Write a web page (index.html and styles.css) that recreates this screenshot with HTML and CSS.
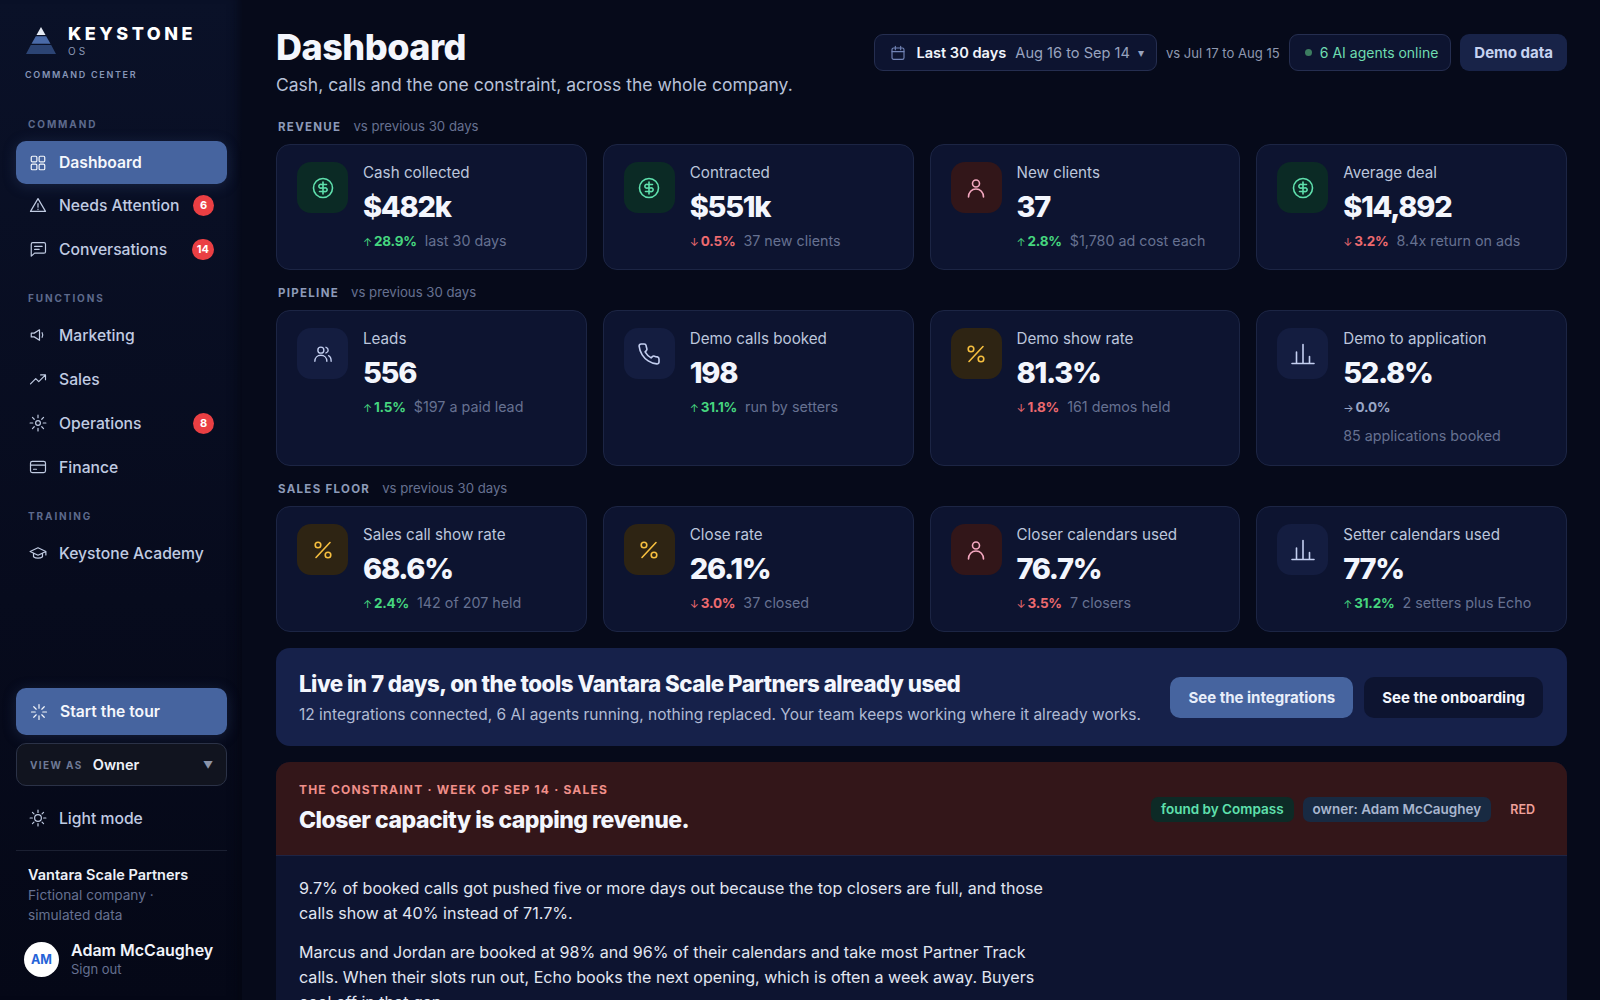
FILE: index.html
```html
<!DOCTYPE html>
<html lang="en">
<head>
    <meta charset="UTF-8">
    <meta name="viewport" content="width=device-width, initial-scale=1.0">
    <title>Keystone OS - Dashboard</title>
    <link rel="stylesheet" href="styles.css">
</head>
<body>
    <!-- Icon sprite -->
    <svg class="sprite" xmlns="http://www.w3.org/2000/svg">
        <symbol id="i-money" viewBox="0 0 24 24"><circle cx="12" cy="12" r="9.5"/><path d="M15.5 8.5H10.5a1.9 1.9 0 1 0 0 3.5h3a1.9 1.9 0 1 1 0 3.500H8.500M12 18V6"/></symbol>
        <symbol id="i-person" viewBox="0 0 24 24"><circle cx="12" cy="7.5" r="3.5"/><path d="M4.5 21c0-4.8 3.2-8 7.5-8s7.500 3.200 7.500 8"/></symbol>
        <symbol id="i-people" viewBox="-2 -2 28 28"><circle cx="9.5" cy="7.5" r="3.5"/><path d="M2.500 20.500c0-4.300 3-7 7-7s7 2.700 7 7M15.500 4.200c1.500.5 2.500 1.800 2.500 3.300s-1 2.800-2.500 3.300M18.500 14c1.900.9 3 3 3 6.500"/></symbol>
        <symbol id="i-phone" viewBox="0 0 24 24"><path d="M22 16.920v3a2 2 0 0 1-2.180 2 19.790 19.790 0 0 1-8.630-3.070 19.500 19.500 0 0 1-6-6 19.790 19.790 0 0 1-3.070-8.670A2 2 0 0 1 4.110 2h3a2 2 0 0 1 2 1.720 12.840 12.840 0 0 0 .7 2.810 2 2 0 0 1-.45 2.110L8.090 9.910a16 16 0 0 0 6 6l1.270-1.270a2 2 0 0 1 2.110-.45 12.840 12.840 0 0 0 2.810.7A2 2 0 0 1 22 16.920z"/></symbol>
        <symbol id="i-percent" viewBox="0 0 24 24"><path d="M19 4.500L5 19.500"/><circle cx="7" cy="7" r="2.800"/><circle cx="17" cy="17" r="2.800"/></symbol>
        <symbol id="i-bars" viewBox="0 0 24 24"><path d="M1 21.500h22M5.500 21.500V10M12 21.500V2.500M18.500 21.500v-7"/></symbol>
    </svg>

    <div class="app">
        <!-- Sidebar -->
        <aside class="sidebar">
            <div class="brand">
                <svg class="brand-mark" viewBox="0 0 30 27">
                    <path d="M15 0l4.500 8h-9z" fill="#e6ebf5"/>
                    <path d="M9.800 9.200h10.400l4.300 7.600H5.500z" fill="#4a6aa8"/>
                    <path d="M4.800 18h20.400L30 27H0z" fill="#2c4474"/>
                </svg>
                <div>
                    <div class="brand-name">KEYSTONE</div>
                    <div class="brand-os">OS</div>
                </div>
            </div>
            <div class="brand-sub">COMMAND CENTER</div>

            <div class="nav-label nav-label-first">COMMAND</div>
            <a class="nav-item active">
                <svg class="nav-icon" viewBox="0 0 24 24"><rect x="3" y="3" width="7.500" height="7.500" rx="1.500"/><rect x="13.500" y="3" width="7.500" height="7.500" rx="1.500"/><rect x="3" y="13.500" width="7.500" height="7.500" rx="1.500"/><rect x="13.500" y="13.500" width="7.500" height="7.500" rx="1.500"/></svg>
                Dashboard
            </a>
            <a class="nav-item">
                <svg class="nav-icon" viewBox="0 0 24 24"><path d="M12 3.500L22 20.500H2zM12 10v5M12 17.500v.5"/></svg>
                Needs Attention
                <span class="badge">6</span>
            </a>
            <a class="nav-item">
                <svg class="nav-icon" viewBox="0 0 24 24"><path d="M3 5.500C3 4.400 3.900 3.500 5 3.500h15c1.100 0 2 .9 2 2v10c0 1.100-.9 2-2 2H7.500L3 21.500zM7.500 8.500h10M7.500 12.500h6"/></svg>
                Conversations
                <span class="badge">14</span>
            </a>

            <div class="nav-label">FUNCTIONS</div>
            <a class="nav-item">
                <svg class="nav-icon" viewBox="0 0 24 24"><path d="M3 9.500v5h4l7 4.500V5L7 9.500zM17.500 9c1 1.800 1 4.200 0 6"/></svg>
                Marketing
            </a>
            <a class="nav-item">
                <svg class="nav-icon" viewBox="0 0 24 24"><path d="M2 18.500l7-7 4 4 9-9M15.500 6.500H22V13"/></svg>
                Sales
            </a>
            <a class="nav-item">
                <svg class="nav-icon" viewBox="0 0 24 24"><circle cx="12" cy="12" r="3.200"/><path d="M12 1.500v3.500M12 19v3.500M1.500 12H5M19 12h3.500M4.600 4.600L7 7M17 17l2.400 2.400M4.600 19.400L7 17M17 7l2.400-2.400"/></svg>
                Operations
                <span class="badge">8</span>
            </a>
            <a class="nav-item">
                <svg class="nav-icon" viewBox="0 0 24 24"><rect x="2" y="4.500" width="20" height="15" rx="2.500"/><path d="M2 9.500h20M6 15h4"/></svg>
                Finance
            </a>

            <div class="nav-label">TRAINING</div>
            <a class="nav-item">
                <svg class="nav-icon" viewBox="0 0 24 24"><path d="M12 5L1.500 10 12 15l10.500-5zM6 12.500V17c2.800 2.600 9.200 2.600 12 0v-4.500M22.500 10v4.500"/></svg>
                Keystone Academy
            </a>

            <div class="sidebar-bottom">
                <button class="tour-button">
                    <svg class="nav-icon" viewBox="0 0 24 24"><path d="M12 2v5M12 17v5M2 12h5M17 12h5M5 5l3.300 3.300M15.700 15.700L19 19M5 19l3.300-3.300M15.700 8.300L19 5"/></svg>
                    Start the tour
                </button>
                <div class="view-as">
                    <span class="view-as-label">VIEW AS</span>
                    <span class="view-as-value">Owner</span>
                    <span class="view-as-caret">▼</span>
                </div>
                <a class="nav-item light-mode">
                    <svg class="nav-icon" viewBox="0 0 24 24"><circle cx="12" cy="12" r="4.500"/><path d="M12 1.500v3M12 19.500v3M1.500 12h3M19.500 12h3M4.600 4.600l2 2M17.400 17.400l2 2M4.600 19.400l2-2M17.400 6.600l2-2"/></svg>
                    Light mode
                </a>
                <div class="company">
                    <div class="company-name">Vantara Scale Partners</div>
                    <div class="company-note">Fictional company · simulated data</div>
                </div>
                <div class="user">
                    <div class="avatar">AM</div>
                    <div>
                        <div class="user-name">Adam McCaughey</div>
                        <div class="user-action">Sign out</div>
                    </div>
                </div>
            </div>
        </aside>

        <!-- Main content -->
        <main class="main">
            <header class="page-head">
                <div>
                    <h1 class="page-title">Dashboard</h1>
                    <p class="page-sub">Cash, calls and the one constraint, across the whole company.</p>
                </div>
                <div class="head-tools">
                    <div class="pill date-pill">
                        <svg class="cal-icon" viewBox="0 0 24 24"><rect x="3" y="4.500" width="18" height="17" rx="2.500"/><path d="M3 10h18M8 2v5M16 2v5"/></svg>
                        <strong>Last 30 days</strong>
                        <span class="date-range">Aug 16 to Sep 14</span>
                        <span class="date-caret">▾</span>
                    </div>
                    <span class="compare">vs Jul 17 to Aug 15</span>
                    <div class="pill agents-pill"><span class="agents-dot"></span>6 AI agents online</div>
                    <div class="demo-pill">Demo data</div>
                </div>
            </header>

            <div class="section-head section-first"><span class="section-name">REVENUE</span><span class="section-note">vs previous 30 days</span></div>
            <section class="card-row">
                <div class="card">
                    <div class="card-icon tint-green"><svg viewBox="0 0 24 24"><use href="#i-money"/></svg></div>
                    <div>
                        <div class="card-label">Cash collected</div>
                        <div class="card-value">$482k</div>
                        <div class="card-delta"><span class="delta up"><i>↑</i>28.9%</span><span class="delta-note">last 30 days</span></div>
                    </div>
                </div>
                <div class="card">
                    <div class="card-icon tint-green"><svg viewBox="0 0 24 24"><use href="#i-money"/></svg></div>
                    <div>
                        <div class="card-label">Contracted</div>
                        <div class="card-value">$551k</div>
                        <div class="card-delta"><span class="delta down"><i>↓</i>0.5%</span><span class="delta-note">37 new clients</span></div>
                    </div>
                </div>
                <div class="card">
                    <div class="card-icon tint-red"><svg viewBox="0 0 24 24"><use href="#i-person"/></svg></div>
                    <div>
                        <div class="card-label">New clients</div>
                        <div class="card-value">37</div>
                        <div class="card-delta"><span class="delta up"><i>↑</i>2.8%</span><span class="delta-note">$1,780 ad cost each</span></div>
                    </div>
                </div>
                <div class="card">
                    <div class="card-icon tint-green"><svg viewBox="0 0 24 24"><use href="#i-money"/></svg></div>
                    <div>
                        <div class="card-label">Average deal</div>
                        <div class="card-value">$14,892</div>
                        <div class="card-delta"><span class="delta down"><i>↓</i>3.2%</span><span class="delta-note">8.4x return on ads</span></div>
                    </div>
                </div>
            </section>

            <div class="section-head"><span class="section-name">PIPELINE</span><span class="section-note">vs previous 30 days</span></div>
            <section class="card-row">
                <div class="card">
                    <div class="card-icon tint-blue"><svg viewBox="0 0 24 24"><use href="#i-people"/></svg></div>
                    <div>
                        <div class="card-label">Leads</div>
                        <div class="card-value">556</div>
                        <div class="card-delta"><span class="delta up"><i>↑</i>1.5%</span><span class="delta-note">$197 a paid lead</span></div>
                    </div>
                </div>
                <div class="card">
                    <div class="card-icon tint-blue"><svg viewBox="0 0 24 24"><use href="#i-phone"/></svg></div>
                    <div>
                        <div class="card-label">Demo calls booked</div>
                        <div class="card-value">198</div>
                        <div class="card-delta"><span class="delta up"><i>↑</i>31.1%</span><span class="delta-note">run by setters</span></div>
                    </div>
                </div>
                <div class="card">
                    <div class="card-icon tint-amber"><svg viewBox="0 0 24 24"><use href="#i-percent"/></svg></div>
                    <div>
                        <div class="card-label">Demo show rate</div>
                        <div class="card-value">81.3%</div>
                        <div class="card-delta"><span class="delta down"><i>↓</i>1.8%</span><span class="delta-note">161 demos held</span></div>
                    </div>
                </div>
                <div class="card">
                    <div class="card-icon tint-blue"><svg viewBox="0 0 24 24"><use href="#i-bars"/></svg></div>
                    <div>
                        <div class="card-label">Demo to application</div>
                        <div class="card-value">52.8%</div>
                        <div class="card-delta card-delta-wrap"><span class="delta flat"><i>→</i>0.0%</span><span class="delta-note">85 applications booked</span></div>
                    </div>
                </div>
            </section>

            <div class="section-head"><span class="section-name">SALES FLOOR</span><span class="section-note">vs previous 30 days</span></div>
            <section class="card-row">
                <div class="card">
                    <div class="card-icon tint-amber"><svg viewBox="0 0 24 24"><use href="#i-percent"/></svg></div>
                    <div>
                        <div class="card-label">Sales call show rate</div>
                        <div class="card-value">68.6%</div>
                        <div class="card-delta"><span class="delta up"><i>↑</i>2.4%</span><span class="delta-note">142 of 207 held</span></div>
                    </div>
                </div>
                <div class="card">
                    <div class="card-icon tint-amber"><svg viewBox="0 0 24 24"><use href="#i-percent"/></svg></div>
                    <div>
                        <div class="card-label">Close rate</div>
                        <div class="card-value">26.1%</div>
                        <div class="card-delta"><span class="delta down"><i>↓</i>3.0%</span><span class="delta-note">37 closed</span></div>
                    </div>
                </div>
                <div class="card">
                    <div class="card-icon tint-red"><svg viewBox="0 0 24 24"><use href="#i-person"/></svg></div>
                    <div>
                        <div class="card-label">Closer calendars used</div>
                        <div class="card-value">76.7%</div>
                        <div class="card-delta"><span class="delta down"><i>↓</i>3.5%</span><span class="delta-note">7 closers</span></div>
                    </div>
                </div>
                <div class="card">
                    <div class="card-icon tint-blue"><svg viewBox="0 0 24 24"><use href="#i-bars"/></svg></div>
                    <div>
                        <div class="card-label">Setter calendars used</div>
                        <div class="card-value">77%</div>
                        <div class="card-delta"><span class="delta up"><i>↑</i>31.2%</span><span class="delta-note">2 setters plus Echo</span></div>
                    </div>
                </div>
            </section>

            <!-- Onboarding banner -->
            <section class="banner">
                <div class="banner-text">
                    <h2 class="banner-title">Live in 7 days, on the tools Vantara Scale Partners already used</h2>
                    <p class="banner-sub">12 integrations connected, 6 AI agents running, nothing replaced. Your team keeps working where it already works.</p>
                </div>
                <div class="banner-actions">
                    <button class="btn btn-primary">See the integrations</button>
                    <button class="btn btn-dark">See the onboarding</button>
                </div>
            </section>

            <!-- Constraint panel -->
            <section class="constraint">
                <div class="constraint-head">
                    <div>
                        <div class="constraint-kicker">THE CONSTRAINT · WEEK OF SEP 14 · SALES</div>
                        <h2 class="constraint-title">Closer capacity is capping revenue.</h2>
                    </div>
                    <div class="constraint-tags">
                        <span class="tag tag-green">found by Compass</span>
                        <span class="tag tag-slate">owner: Adam McCaughey</span>
                        <span class="tag-red">RED</span>
                    </div>
                </div>
                <div class="constraint-body">
                    <p>9.7% of booked calls got pushed five or more days out because the top closers are full, and those calls show at 40% instead of 71.7%.</p>
                    <p>Marcus and Jordan are booked at 98% and 96% of their calendars and take most Partner Track calls. When their slots run out, Echo books the next opening, which is often a week away. Buyers cool off in that gap.</p>
                </div>
            </section>
        </main>
    </div>
</body>
</html>
```

FILE: styles.css
```css
* {
    margin: 0;
    padding: 0;
    box-sizing: border-box;
}

body {
    font-family: Inter, "Noto Sans", sans-serif;
    background: #060a1a;
    color: #f1f4fb;
    height: 100vh;
    overflow: hidden;
}

.sprite {
    display: none;
}

.app {
    display: flex;
    height: 100vh;
    overflow: hidden;
}

/* Sidebar */
.sidebar {
    width: 242px;
    flex: none;
    height: 100vh;
    padding: 27px 15px 0 16px;
    display: flex;
    flex-direction: column;
    background: linear-gradient(180deg, #0a1128 0%, #070b1d 60%, #050817 100%);
    box-shadow: inset -12px 0 14px -12px #04060f;
}

.brand {
    display: flex;
    gap: 12px;
    padding-left: 10px;
}

.brand-mark {
    width: 30px;
    height: 27px;
    flex: none;
}

.brand-name {
    font-size: 18px;
    font-weight: 800;
    letter-spacing: 3.5px;
    line-height: 14px;
    color: #fff;
}

.brand-os {
    font-size: 10px;
    letter-spacing: 3px;
    line-height: 12px;
    margin-top: 4px;
    color: #8b97b5;
}

.brand-sub {
    font-size: 9px;
    font-weight: 600;
    letter-spacing: 1.7px;
    color: #8796b8;
    margin: 12px 0 0 9px;
    line-height: 12px;
}

.nav-label {
    font-size: 10px;
    font-weight: 700;
    letter-spacing: 1.9px;
    color: #5d6a8c;
    line-height: 12px;
    margin: 20px 0 10px 12px;
}

.nav-label-first {
    margin: 37px 0 10px 12px;
}

.nav-item {
    display: flex;
    align-items: center;
    gap: 12px;
    height: 42px;
    margin-bottom: 2px;
    padding: 0 13px;
    border-radius: 10px;
    font-size: 15.7px;
    font-weight: 500;
    color: #c0cbe2;
}

.nav-item.active {
    height: 43px;
    margin-top: 1px;
    margin-bottom: 0;
    background: #46649f;
    color: #f4f7fc;
    font-weight: 600;
    box-shadow: 0 2px 14px rgba(70, 100, 159, 0.25);
}

.nav-icon {
    width: 18px;
    height: 18px;
    flex: none;
    fill: none;
    stroke: currentColor;
    stroke-width: 1.6;
    stroke-linecap: round;
    stroke-linejoin: round;
}

.badge {
    margin-left: auto;
    min-width: 21px;
    height: 21px;
    padding: 0 5px;
    border-radius: 11px;
    background: #ea3f43;
    color: #fff;
    font-size: 11px;
    font-weight: 700;
    display: flex;
    align-items: center;
    justify-content: center;
}

.sidebar-bottom {
    margin-top: auto;
    padding-bottom: 21px;
}

.tour-button {
    width: 100%;
    height: 47px;
    display: flex;
    align-items: center;
    gap: 12px;
    padding: 0 14px;
    border: none;
    border-radius: 10px;
    background: #46649f;
    color: #f4f7fc;
    font: 600 15.7px Inter, sans-serif;
    box-shadow: 0 2px 14px rgba(70, 100, 159, 0.25);
}

.view-as {
    height: 43px;
    margin-top: 8px;
    display: flex;
    align-items: center;
    padding: 0 13px;
    border: 1px solid #2b3247;
    border-radius: 10px;
    background: #11141f;
}

.view-as-label {
    font-size: 10px;
    font-weight: 700;
    letter-spacing: 1.4px;
    color: #6f7a96;
    margin-right: 10px;
}

.view-as-value {
    font-size: 14.5px;
    font-weight: 600;
    color: #eef1f8;
}

.view-as-caret {
    margin-left: auto;
    font-size: 10px;
    color: #8b94aa;
}

.light-mode {
    margin-top: 11px;
    margin-bottom: 11px;
}

.company {
    border-top: 1px solid #1b2032;
    padding: 15px 12px 0;
}

.company-name {
    font-size: 14.5px;
    font-weight: 600;
    color: #eef1f8;
    line-height: 17px;
}

.company-note {
    font-size: 13.7px;
    color: #667191;
    line-height: 20px;
    margin-top: 2px;
    width: 135px;
}

.user {
    display: flex;
    align-items: center;
    gap: 12px;
    padding: 15px 0 0 8px;
}

.avatar {
    width: 35px;
    height: 35px;
    border-radius: 50%;
    background: #fff;
    color: #2563d8;
    font-size: 12.5px;
    font-weight: 700;
    display: flex;
    align-items: center;
    justify-content: center;
}

.user-name {
    font-size: 16px;
    font-weight: 600;
    color: #f1f4fb;
    line-height: 20px;
}

.user-action {
    font-size: 13px;
    color: #667191;
    line-height: 19px;
}

/* Main content */
.main {
    flex: 1;
    min-width: 0;
    padding: 23px 33px 0 34px;
}

.page-head {
    display: flex;
    justify-content: space-between;
    align-items: flex-start;
}

.page-title {
    font-size: 36px;
    font-weight: 800;
    letter-spacing: -0.5px;
    line-height: 48px;
    color: #f3f6fd;
}

.page-sub {
    font-size: 17.5px;
    color: #b7c1d8;
    line-height: 24px;
    margin-top: 2px;
}

.head-tools {
    display: flex;
    align-items: center;
    gap: 9px;
    margin-top: 11px;
}

.pill {
    height: 37px;
    display: flex;
    align-items: center;
    padding: 0 12px 0 15px;
    border: 1px solid #252e50;
    border-radius: 9px;
    background: #0d1430;
    font-size: 14px;
}

.date-pill {
    font-size: 14.6px;
}

.date-pill strong {
    font-weight: 600;
    color: #f1f4fb;
}

.cal-icon {
    width: 16px;
    height: 16px;
    margin-right: 10px;
    fill: none;
    stroke: #7284b6;
    stroke-width: 1.7;
    stroke-linecap: round;
}

.date-range {
    margin-left: 9px;
    color: #98a3bf;
}

.date-caret {
    margin-left: 8px;
    font-size: 12px;
    color: #98a3bf;
}

.compare {
    font-size: 13.1px;
    color: #8e98b0;
}

.agents-pill {
    color: #6fdcb0;
}

.agents-dot {
    width: 7px;
    height: 7px;
    margin-right: 8px;
    border-radius: 50%;
    background: #3c7d60;
}

.demo-pill {
    height: 37px;
    display: flex;
    align-items: center;
    padding: 0 14px;
    border-radius: 9px;
    background: #182348;
    color: #c6d2f0;
    font-size: 15px;
    font-weight: 700;
}

.section-head {
    display: flex;
    align-items: baseline;
    gap: 12px;
    padding-left: 2px;
    margin: 13px 0 8px;
    line-height: 18px;
}

.section-first {
    margin-top: 20px;
}

.section-name {
    font-size: 11.5px;
    font-weight: 700;
    letter-spacing: 1.3px;
    color: #8d9ab8;
}

.section-note {
    font-size: 13.2px;
    color: #667191;
}

.card-row {
    display: grid;
    grid-template-columns: repeat(4, 1fr);
    gap: 16px;
}

.card {
    min-height: 126px;
    display: flex;
    gap: 15px;
    padding: 18px 16px 16px 20px;
    border: 1px solid #1c2544;
    border-radius: 14px;
    background: #0d1430;
}

.card-icon {
    width: 51px;
    height: 51px;
    flex: none;
    margin-top: -1px;
    border-radius: 14px;
    display: flex;
    align-items: center;
    justify-content: center;
}

.card-icon svg {
    width: 24px;
    height: 24px;
    fill: none;
    stroke: currentColor;
    stroke-width: 1.6;
    stroke-linecap: round;
    stroke-linejoin: round;
}

.tint-green {
    background: #0b2a25;
    color: #5fe0ad;
}

.tint-red {
    background: #321619;
    color: #f5a8c0;
}

.tint-blue {
    background: #141d40;
    color: #c4cff0;
}

.tint-amber {
    background: #2e2413;
    color: #f6bf3f;
}

.card-label {
    font-size: 15.2px;
    color: #bcc6dc;
    line-height: 20px;
}

.card-value {
    font-size: 29px;
    font-weight: 800;
    letter-spacing: -1.3px;
    color: #f3f6fd;
    line-height: 38px;
    margin-top: 5px;
}

.card-delta {
    display: flex;
    flex-wrap: wrap;
    align-items: baseline;
    gap: 0 8px;
    margin-top: 5px;
    line-height: 20px;
}

.card-delta-wrap {
    flex-direction: column;
    gap: 8px;
    margin-bottom: 3px;
}

.delta {
    font-size: 13.5px;
    font-weight: 700;
    letter-spacing: -0.2px;
}

.delta i {
    font-style: normal;
    font-weight: 400;
    font-size: 11px;
    margin-right: 2px;
}

.delta.up {
    color: #46d67f;
}

.delta.down {
    color: #ec6a6f;
}

.delta.flat {
    color: #99a6c6;
}

.delta-note {
    font-size: 14.3px;
    color: #667191;
}

/* Banner */
.banner {
    display: flex;
    align-items: center;
    justify-content: space-between;
    height: 98px;
    margin-top: 16px;
    padding: 0 24px 0 23px;
    border-radius: 14px;
    background: #16214a;
}

.banner-title {
    font-size: 22.3px;
    font-weight: 800;
    letter-spacing: -0.5px;
    color: #f3f6fd;
    line-height: 28px;
}

.banner-sub {
    font-size: 15.5px;
    color: #b0bbd4;
    line-height: 20px;
    margin-top: 7px;
}

.banner-actions {
    display: flex;
    gap: 11px;
}

.btn {
    height: 41px;
    padding: 0 18px;
    border: none;
    border-radius: 10px;
    font: 700 15px Inter, sans-serif;
    white-space: nowrap;
}

.btn-primary {
    background: #46649f;
    color: #e8eefa;
}

.btn-dark {
    background: #0d1430;
    color: #f3f6fd;
}

/* Constraint panel */
.constraint {
    margin-top: 16px;
    border-radius: 14px;
    background: #0d1430;
    overflow: hidden;
}

.constraint-head {
    height: 94px;
    display: flex;
    justify-content: space-between;
    align-items: center;
    padding: 0 32px 0 23px;
    background: #331619;
    border-bottom: 1px solid #1e2444;
}

.constraint-kicker {
    font-size: 12px;
    font-weight: 700;
    letter-spacing: 1.2px;
    color: #f08f8a;
    line-height: 16px;
}

.constraint-title {
    font-size: 23px;
    font-weight: 800;
    letter-spacing: -0.5px;
    color: #f3f6fd;
    line-height: 32px;
    margin-top: 6px;
}

.constraint-tags {
    display: flex;
    align-items: center;
    gap: 9px;
    margin-top: 1px;
}

.tag {
    height: 25px;
    display: flex;
    align-items: center;
    padding: 0 10px;
    border-radius: 7px;
    font-size: 13.5px;
    font-weight: 600;
}

.tag-green {
    background: #0d2a26;
    color: #5fe0ad;
}

.tag-slate {
    background: #182a42;
    color: #a9b6cf;
}

.tag-red {
    margin-left: 10px;
    font-size: 12.5px;
    font-weight: 600;
    color: #f0a09a;
}

.constraint-body {
    padding: 20px 23px;
    width: 800px;
}

.constraint-body p {
    font-size: 16.1px;
    color: #e1e6f1;
    line-height: 25px;
    margin-bottom: 14px;
}
```
